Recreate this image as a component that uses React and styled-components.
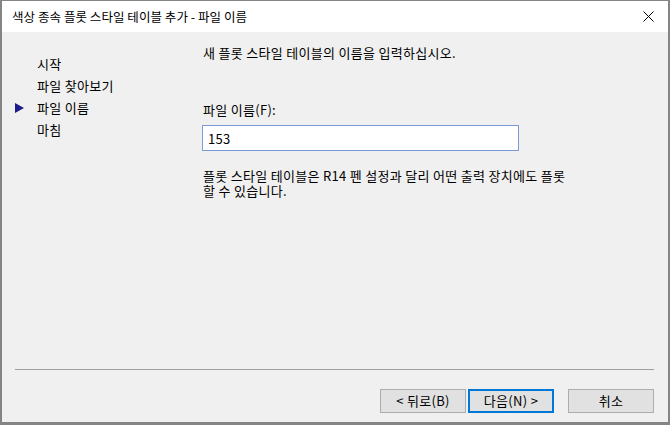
import React from "react";
import styled, { createGlobalStyle } from "styled-components";

const Global = createGlobalStyle`
  html, body { margin: 0; padding: 0; background: #fff; }
  body { font-family: "Noto Sans CJK KR", "Noto Sans", sans-serif; font-size: 13px; letter-spacing: 0.3px; color: #000; }
`;

const Window = styled.div`
  box-sizing: border-box;
  width: 670px;
  height: 425px;
  display: flex;
  flex-direction: column;
  border-style: solid;
  border-color: #858585;
  border-width: 1px 2px 3px 2px;
  background: #f0f0f0;
`;

const TitleBar = styled.div`
  height: 31px;
  flex: none;
  background: #fff;
  display: flex;
  align-items: center;
  justify-content: space-between;
  padding: 0 14px 0 10px;
`;

const Title = styled.span`
  font-size: 12.5px;
  letter-spacing: 0.05px;
  line-height: 16px;
  padding-top: 1px;
`;

const CloseBtn = styled.svg`
  width: 11px;
  height: 11px;
  display: block;
`;

const Body = styled.div`
  flex: 1;
  display: flex;
  flex-direction: column;
`;

const Main = styled.div`
  flex: 1;
  display: flex;
`;

const Sidebar = styled.ul`
  list-style: none;
  margin: 0;
  padding: 21px 0 0 0;
  width: 201px;
  flex: none;
`;

const NavItem = styled.li`
  display: flex;
  align-items: center;
  height: 22px;
  line-height: 22px;
  padding-left: ${(p) => (p.$active ? "13px" : "35px")};
`;

const Marker = styled.svg`
  width: 9px;
  height: 10px;
  margin-right: 13px;
  display: block;
`;

const Content = styled.div`
  flex: 1;
  display: flex;
  flex-direction: column;
  padding-top: 13px;
`;

const Heading = styled.div`
  line-height: 16px;
`;

const Label = styled.label`
  display: block;
  line-height: 16px;
  margin-top: 41px;
`;

const Input = styled.input`
  box-sizing: border-box;
  width: 317px;
  height: 26px;
  margin: 7px 0 0 -1px;
  border: 1px solid #7a9ad8;
  background: #fff;
  font-family: "Noto Sans CJK KR", "Noto Sans", sans-serif;
  font-size: 13px;
  letter-spacing: 0.3px;
  padding: 0 5px;
  color: #000;
  outline: none;
`;

const Note = styled.p`
  margin: 17px 0 0 0;
  line-height: 15px;
  width: 390px;
`;

const Footer = styled.div`
  flex: none;
  padding: 0 14px 9px 13px;
`;

const Separator = styled.hr`
  margin: 0 0 19px 0;
  border: none;
  height: 1px;
  background: #a0a0a0;
`;

const ButtonRow = styled.div`
  display: flex;
  justify-content: flex-end;
`;

const Button = styled.button`
  box-sizing: border-box;
  width: 86px;
  height: 24px;
  margin-left: ${(p) => p.$gap || 0}px;
  background: #e1e1e1;
  border: ${(p) => (p.$default ? "2px solid #0078d7" : "1px solid #adadad")};
  font-family: "Noto Sans CJK KR", "Noto Sans", sans-serif;
  font-size: 13px;
  letter-spacing: 0.3px;
  color: #000;
  padding: 0;
  line-height: 20px;
`;

export default function App() {
  return (
    <>
      <Global />
      <Window>
        <TitleBar>
          <Title>색상 종속 플롯 스타일 테이블 추가 - 파일 이름</Title>
          <CloseBtn viewBox="0 0 11 11">
            <path d="M0.5 0.5 L10.5 10.5 M10.5 0.5 L0.5 10.5" stroke="#000" strokeWidth="1" fill="none" />
          </CloseBtn>
        </TitleBar>
        <Body>
          <Main>
            <Sidebar>
              <NavItem>시작</NavItem>
              <NavItem>파일 찾아보기</NavItem>
              <NavItem $active>
                <Marker viewBox="0 0 9 10">
                  <path d="M0 0 L9 5 L0 10 Z" fill="#1c1c8a" />
                </Marker>
                파일 이름
              </NavItem>
              <NavItem>마침</NavItem>
            </Sidebar>
            <Content>
              <Heading>새 플롯 스타일 테이블의 이름을 입력하십시오.</Heading>
              <Label>파일 이름(F):</Label>
              <Input defaultValue="153" />
              <Note>
                플롯 스타일 테이블은 R14 펜 설정과 달리 어떤 출력 장치에도 플롯
                <br />할 수 있습니다.
              </Note>
            </Content>
          </Main>
          <Footer>
            <Separator />
            <ButtonRow>
              <Button>&lt; 뒤로(B)</Button>
              <Button $default $gap={2}>다음(N) &gt;</Button>
              <Button $gap={14}>취소</Button>
            </ButtonRow>
          </Footer>
        </Body>
      </Window>
    </>
  );
}
